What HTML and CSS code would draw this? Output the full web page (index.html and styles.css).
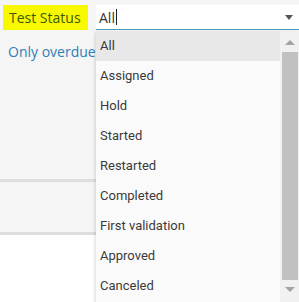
FILE: index.html
```html
<!DOCTYPE html>
<html lang="en">

<head>
    <meta charset="UTF-8">
    <meta name="viewport" content="width=device-width, initial-scale=1.0">
    <title>filter</title>
    <link rel="stylesheet" href="styles.css">
</head>

<body>

    <div class="top">
        <div class="row">
            <div class="lbl">Test Status</div>
            <div class="pick">
                <div class="box">
                    <span class="val">All</span><span class="caret"></span>
                    <span class="arr"></span>
                </div>
                <div class="menu">
                    <div class="opts">
                        <div class="opt on">All</div>
                        <div class="opt">Assigned</div>
                        <div class="opt">Hold</div>
                        <div class="opt">Started</div>
                        <div class="opt">Restarted</div>
                        <div class="opt">Completed</div>
                        <div class="opt">First validation</div>
                        <div class="opt">Approved</div>
                        <div class="opt">Canceled</div>
                    </div>
                    <div class="bar">
                        <div class="up"></div>
                        <div class="thumb"></div>
                        <div class="down"></div>
                    </div>
                </div>
            </div>
        </div>
        <div class="over">Only overdue</div>
    </div>
    <div class="mid"></div>
    <div class="foot"></div>

</body>

</html>
```

FILE: styles.css
```css
body {
    margin: 0;
    background-color: #fff;
    font-family: Roboto, "Liberation Sans", sans-serif;
}

.top {
    background-color: #f5f5f5;
    height: 179px;
    border-bottom: 3px solid #dedede;
}

.row {
    display: flex;
    flex-direction: row;
    padding-top: 5px;
}

.lbl {
    margin-left: 3px;
    width: 85px;
    height: 25px;
    background-color: #f8f800;
    color: #3e5a06;
    font-family: "Open Sans", sans-serif;
    font-size: 14px;
    line-height: 25px;
    padding-left: 6px;
    box-sizing: border-box;
}

.pick {
    position: relative;
    margin-left: 8px;
    flex: 1;
}

.box {
    display: flex;
    align-items: center;
    height: 24px;
    background-color: #fff;
    border-bottom: 1px solid #4a9bbf;
    padding-left: 3px;
    font-family: "Open Sans", sans-serif;
    font-size: 14px;
    color: #333;
}

.caret {
    width: 1px;
    height: 16px;
    background-color: #222;
    margin-left: 1px;
}

.arr {
    margin-left: auto;
    margin-right: 6px;
    border-left: 4px solid transparent;
    border-right: 4px solid transparent;
    border-top: 5px solid #555;
}

.menu {
    position: absolute;
    top: 26px;
    left: 0;
    right: 0;
    height: 272px;
    display: flex;
    flex-direction: row;
    background-color: #fafafa;
    box-shadow: -1px 1px 3px rgba(0, 0, 0, 0.15);
}

.opts {
    flex: 1;
    overflow: hidden;
}

.opt {
    height: 30px;
    line-height: 30px;
    padding-left: 4px;
    font-size: 13px;
    color: #3a3a3a;
}

.on {
    background-color: #e8e8e8;
}

.bar {
    width: 19px;
    background-color: #f1f1f1;
    display: flex;
    flex-direction: column;
    align-items: center;
}

.up {
    margin-top: 9px;
    border-left: 5px solid transparent;
    border-right: 5px solid transparent;
    border-bottom: 5px solid #a3a3a3;
}

.thumb {
    margin-top: 7px;
    width: 16px;
    height: 228px;
    background-color: #c1c1c1;
}

.down {
    margin-top: 7px;
    border-left: 5px solid transparent;
    border-right: 5px solid transparent;
    border-top: 5px solid #a3a3a3;
}

.over {
    margin-top: 12px;
    margin-left: 8px;
    font-family: "Open Sans", sans-serif;
    font-size: 14px;
    color: #2e7fb5;
}

.mid {
    height: 50px;
    background-color: #f5f5f5;
    border-bottom: 3px solid #dedede;
}

.foot {
    height: 67px;
}
```
